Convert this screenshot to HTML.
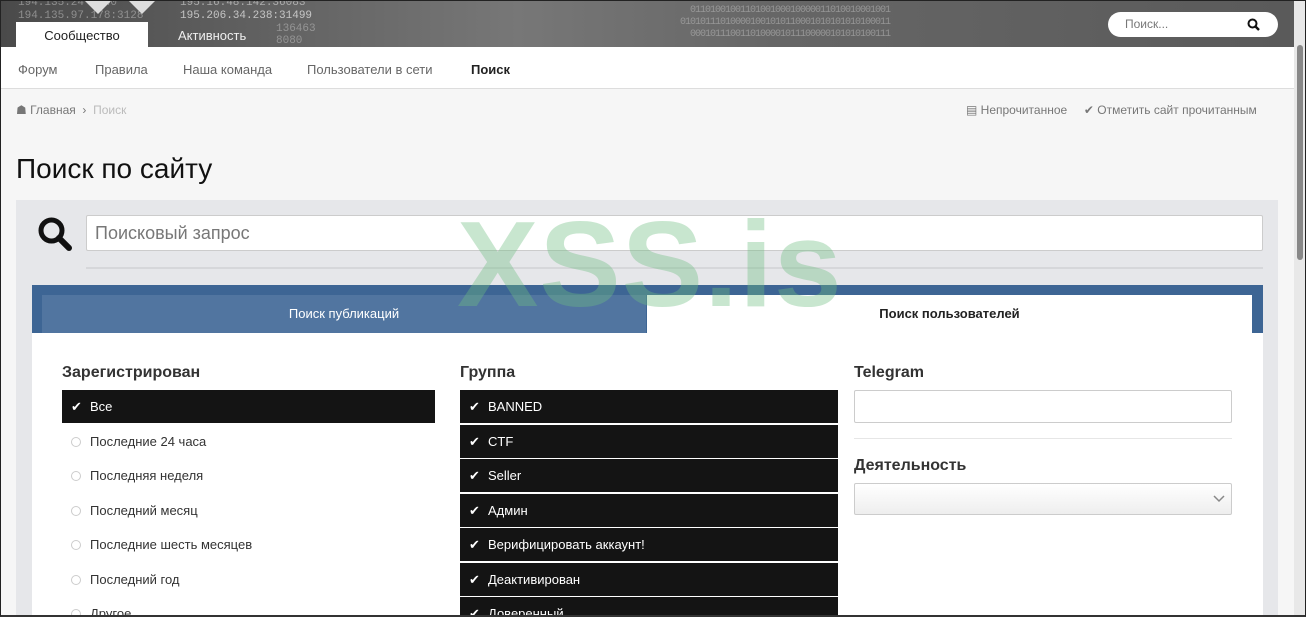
<!DOCTYPE html>
<html><head><meta charset="utf-8"><style>
*{box-sizing:border-box;margin:0;padding:0}
html{width:1306px;height:617px;overflow:hidden}
body{width:1306px;height:617px;overflow:hidden;background:#f6f6f6;font-family:"Liberation Sans Narrow","Liberation Sans",sans-serif;position:relative;color:#333}
.frame{position:absolute;left:0;top:0;width:1306px;height:617px;border:1px solid #222;border-bottom:2px solid #333;pointer-events:none;z-index:20}
.hdr{position:absolute;left:0;top:0;width:1294px;height:47px;background:linear-gradient(90deg,#4a4a4a,#777 40%,#666 60%,#5a5a5a)}
.hdr .ip{position:absolute;color:#aaa;font-size:11px;font-family:"Liberation Mono",monospace;opacity:.7}
.tab1{position:absolute;left:16px;top:22px;width:132px;height:25px;background:#fff;font-size:13px;text-align:center;line-height:27px;color:#222}
.tab2{position:absolute;left:178px;top:22px;font-size:13px;line-height:27px;color:#eee}
.srch{position:absolute;left:1108px;top:12px;width:170px;height:25px;background:#fff;border-radius:13px;font-size:12px;color:#777;line-height:25px;padding-left:17px}
.nav{position:absolute;left:0;top:47px;width:1294px;height:42px;background:#fff;border-bottom:1px solid #ddd;font-size:13px;color:#666}
.nav span{position:absolute;top:15px}
.bc{position:absolute;top:103px;font-size:12px;color:#777}
h1{position:absolute;left:16px;top:153px;font-size:28px;font-weight:normal;color:#111;font-family:"Liberation Sans",sans-serif}
.panel{position:absolute;left:16px;top:200px;width:1262px;height:417px;background:#e6e7ea}
.inp{position:absolute;left:86px;top:215px;width:1177px;height:36px;background:#fff;border:1px solid #ccc;border-radius:2px;font-size:18px;color:#777;line-height:34px;padding-left:8px}
.line{position:absolute;left:86px;top:267px;width:1177px;height:2px;background:#d6d7da}
.blue{position:absolute;left:32px;top:285px;width:1231px;height:48px;background:#3d6594}
.t1{position:absolute;left:42px;top:295px;width:604px;height:38px;background:#5175a0;color:#fff;font-size:13px;text-align:center;line-height:38px}
.t2{position:absolute;left:647px;top:295px;width:605px;height:38px;background:#fff;color:#222;font-size:13px;font-weight:bold;text-align:center;line-height:38px}
.white{position:absolute;left:32px;top:333px;width:1231px;height:284px;background:#fff}
.hd{position:absolute;top:364px;font-size:16px;font-weight:bold;color:#333}
.row{position:absolute;height:33px;font-size:13px;line-height:33px;padding-left:28px;overflow:hidden}
.row.on{background:#141414;color:#fff}
.row.on:before{content:"✔";position:absolute;left:9px;font-size:13px}
.row.off{color:#333}
.row.off:before{content:"";position:absolute;left:9px;top:12px;width:8px;height:8px;border:1px solid #ccc;border-radius:50%}
.wm{position:absolute;left:457px;top:194px;font-family:"Liberation Sans",sans-serif;font-weight:bold;font-size:122px;color:rgba(110,190,130,.38);letter-spacing:1px;z-index:10}
.sb{position:absolute;left:1294px;top:0;width:12px;height:617px;background:#e8e8e8}
.thumb{position:absolute;left:1297px;top:45px;width:6px;height:215px;background:#888;border-radius:3px}
</style></head><body>
<div class="hdr">
<div class="ip" style="left:18px;top:-3px">194.135.24 8.40</div>
<div class="ip" style="left:18px;top:10px">194.135.97.178:3128</div>
<div class="ip" style="left:180px;top:-3px;color:#ccc">195.16.48.142:36083</div>
<div class="ip" style="left:180px;top:10px;color:#eee">195.206.34.238:31499</div>
<div class="ip" style="left:276px;top:23px">136463</div>
<div class="ip" style="left:276px;top:35px">8080</div>
<div class="ip" style="left:690px;top:5px;letter-spacing:-1px;font-size:10px">0110100100110100100010000011010010001001</div>
<div class="ip" style="left:680px;top:17px;letter-spacing:-1px;font-size:10px">010101110100001001010110001010101010100011</div>
<div class="ip" style="left:690px;top:29px;letter-spacing:-1px;font-size:10px">0001011100110100001011100000101010100111</div>
<svg style="position:absolute;left:82px;top:0" width="80" height="16"><path d="M2 0 L16 14 L30 0Z M46 0 L60 14 L74 0Z" fill="#ddd"/></svg>
</div>
<div class="tab1">Сообщество</div>
<div class="tab2">Активность</div>
<div class="srch">Поиск...<svg style="position:absolute;right:18px;top:6px" width="13" height="13" viewBox="0 0 13 13"><circle cx="5.5" cy="5.5" r="4" fill="none" stroke="#111" stroke-width="2"/><path d="M8.5 8.5L12 12" stroke="#111" stroke-width="2.4"/></svg></div>
<div class="nav"><span style="left:18px">Форум</span><span style="left:95px">Правила</span><span style="left:183px">Наша команда</span><span style="left:307px">Пользователи в сети</span><span style="left:471px;color:#222;font-weight:bold">Поиск</span></div>
<div class="bc" style="left:16px">☗ Главная &nbsp;›&nbsp; <span style="color:#bbb">Поиск</span></div>
<div class="bc" style="left:966px">▤ Непрочитанное &nbsp;&nbsp;&nbsp; ✔ Отметить сайт прочитанным</div>
<h1>Поиск по сайту</h1>
<div class="panel"></div>
<svg style="position:absolute;left:37px;top:216px" width="36" height="36" viewBox="0 0 36 36"><circle cx="14.5" cy="14.5" r="10.5" fill="none" stroke="#111" stroke-width="5"/><path d="M22 22L32 32" stroke="#111" stroke-width="6" stroke-linecap="round"/></svg>
<div class="inp">Поисковый запрос</div>
<div class="line"></div>
<div class="blue"></div>
<div class="t1">Поиск публикаций</div>
<div class="t2">Поиск пользователей</div>
<div class="white"></div>
<div class="hd" style="left:62px">Зарегистрирован</div>
<div class="hd" style="left:460px">Группа</div>
<div class="hd" style="left:854px">Telegram</div>
<div class="row on" style="left:62px;top:390px;width:373px">Все</div>
<div class="row off" style="left:62px;top:425px;width:373px">Последние 24 часа</div>
<div class="row off" style="left:62px;top:459px;width:373px">Последняя неделя</div>
<div class="row off" style="left:62px;top:494px;width:373px">Последний месяц</div>
<div class="row off" style="left:62px;top:528px;width:373px">Последние шесть месяцев</div>
<div class="row off" style="left:62px;top:563px;width:373px">Последний год</div>
<div class="row off" style="left:62px;top:597px;width:373px;height:20px">Другое</div>
<div class="row on" style="left:460px;top:390px;width:378px">BANNED</div>
<div class="row on" style="left:460px;top:425px;width:378px">CTF</div>
<div class="row on" style="left:460px;top:459px;width:378px">Seller</div>
<div class="row on" style="left:460px;top:494px;width:378px">Админ</div>
<div class="row on" style="left:460px;top:528px;width:378px">Верифицировать аккаунт!</div>
<div class="row on" style="left:460px;top:563px;width:378px">Деактивирован</div>
<div class="row on" style="left:460px;top:597px;width:378px;height:20px">Доверенный</div>
<div style="position:absolute;left:854px;top:390px;width:378px;height:33px;border:1px solid #ccc;border-radius:2px"></div>
<div style="position:absolute;left:854px;top:438px;width:378px;height:1px;background:#e6e6e6"></div>
<div class="hd" style="left:854px;top:457px">Деятельность</div>
<div style="position:absolute;left:854px;top:483px;width:378px;height:32px;border:1px solid #ccc;border-radius:2px;background:linear-gradient(#fff,#eee)"><svg style="position:absolute;right:6px;top:11px" width="12" height="8"><path d="M1 1L6 6L11 1" fill="none" stroke="#888" stroke-width="1.5"/></svg></div>
<div class="wm">XSS.is</div>
<div class="sb"></div><div class="thumb"></div>
<div class="frame"></div>
</body></html>
